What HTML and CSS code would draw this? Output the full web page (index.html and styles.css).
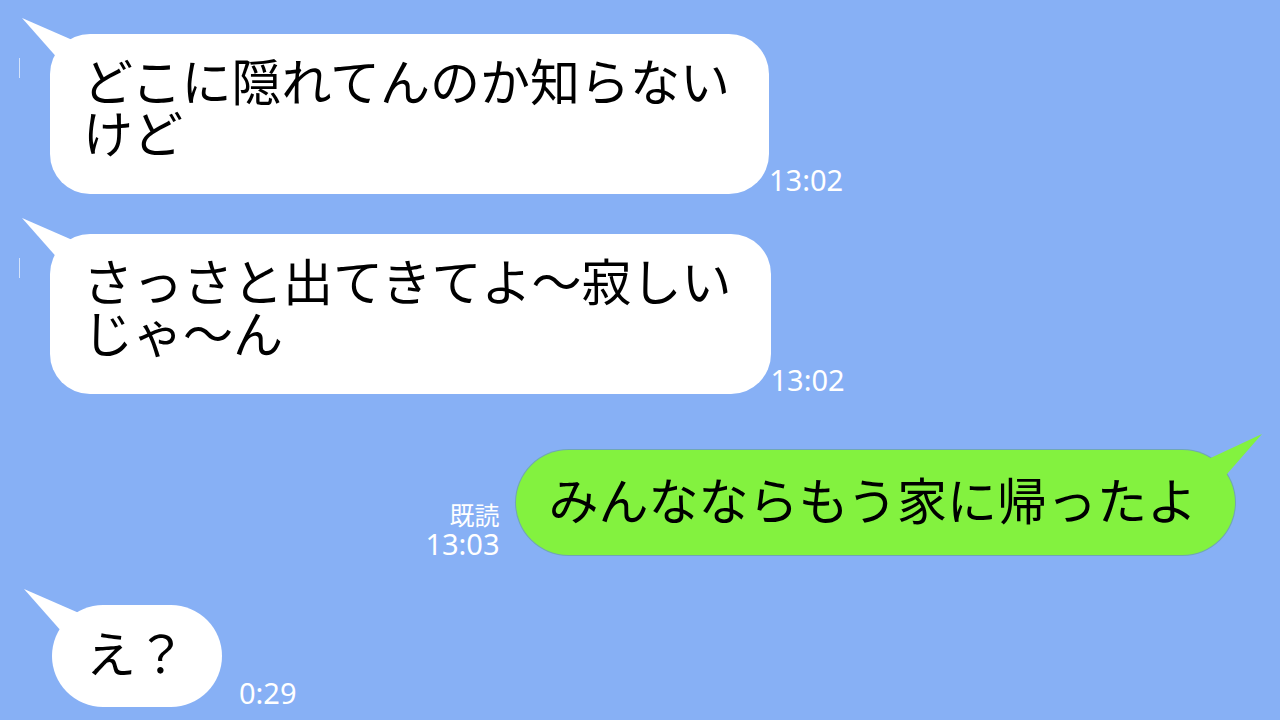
FILE: index.html
```html
<!DOCTYPE html>
<html lang="ja">
<head>
<meta charset="utf-8">
<title>トーク</title>
<link rel="stylesheet" href="styles.css">
</head>
<body>
<main class="chat">
  <div class="row row-in">
    <div class="bubble bubble-in bubble-wide">
      <span class="tick"></span>
      <svg class="tail tail-in" width="60" height="60" viewBox="0 0 60 60"><polygon points="2,2 57,26 40,45" fill="#fff"/></svg>
      <p class="msg">どこに隠れてんのか知らない<br>けど</p>
    </div>
    <span class="time">13:02</span>
  </div>

  <div class="row row-in row-gap-a">
    <div class="bubble bubble-in bubble-wide">
      <span class="tick"></span>
      <svg class="tail tail-in" width="60" height="60" viewBox="0 0 60 60"><polygon points="2,2 57,26 40,45" fill="#fff"/></svg>
      <p class="msg">さっさと出てきてよ～寂しい<br>じゃ～ん</p>
    </div>
    <span class="time">13:02</span>
  </div>

  <div class="row row-out row-gap-b">
    <div class="meta">
      <span class="read">既読</span>
      <span class="time time-out">13:03</span>
    </div>
    <div class="bubble bubble-out">
      <svg class="tail tail-out" width="70" height="60" viewBox="0 0 70 60"><polygon points="67,4 7,32 25,52" fill="#83f23f"/></svg>
      <p class="msg">みんなならもう家に帰ったよ</p>
    </div>
  </div>

  <div class="row row-in row-gap-c row-short">
    <div class="bubble bubble-in bubble-small">
      <svg class="tail tail-in" width="60" height="60" viewBox="0 0 60 60"><polygon points="2,2 57,26 40,45" fill="#fff"/></svg>
      <p class="msg">え？</p>
    </div>
    <span class="time time-far">0:29</span>
  </div>
</main>
</body>
</html>
```

FILE: styles.css
```css
html, body {
  margin: 0;
  padding: 0;
}

body {
  width: 1280px;
  height: 720px;
  overflow: hidden;
  background: #87b0f5;
  font-family: "Noto Sans CJK JP", "Noto Sans", sans-serif;
}

.chat {
  display: flex;
  flex-direction: column;
  padding-top: 34px;
}

.row {
  display: flex;
  align-items: flex-end;
}

.row-in {
  padding-left: 50px;
}

.row-short {
  padding-left: 52px;
}

.row-out {
  justify-content: flex-end;
  padding-right: 45px;
}

.row-gap-a {
  margin-top: 40px;
}

.row-gap-b {
  margin-top: 56px;
}

.row-gap-c {
  margin-top: 50px;
}

.bubble {
  position: relative;
}

.msg {
  margin: 0;
  font-size: 50px;
  line-height: 52px;
  color: #000;
  white-space: nowrap;
  position: relative;
}

.bubble-in {
  background: #fff;
}

.bubble-wide {
  border-radius: 40px;
  padding: 19px 39px 37px 33px;
}

.bubble-small {
  border-radius: 51px;
  padding: 20px 36px 30px 34px;
}

.bubble-out {
  background: #83f23f;
  border-radius: 53px;
  padding: 22px 38px 31px 33px;
  box-shadow: 0 0 0 1px rgba(70, 150, 60, 0.35);
}

.tail {
  position: absolute;
  display: block;
}

.tail-in {
  left: -30px;
  top: -18px;
}

.tail-out {
  right: -30px;
  top: -20px;
}

.tick {
  position: absolute;
  left: -31px;
  top: 24px;
  width: 1px;
  height: 20px;
  background: #d4e3fb;
}

.time {
  font-family: "Noto Sans", "Noto Sans CJK JP", sans-serif;
  font-size: 29px;
  line-height: 30px;
  color: #fff;
  margin-bottom: -1px;
  margin-left: 0;
}

.time-far {
  margin-left: 17px;
}

.meta {
  display: flex;
  flex-direction: column;
  align-items: flex-end;
  margin-right: 16px;
  margin-bottom: -4px;
}

.read {
  font-size: 25px;
  line-height: 30px;
  color: #fff;
}

.time-out {
  margin-bottom: 0;
  margin-left: 0;
}
```
